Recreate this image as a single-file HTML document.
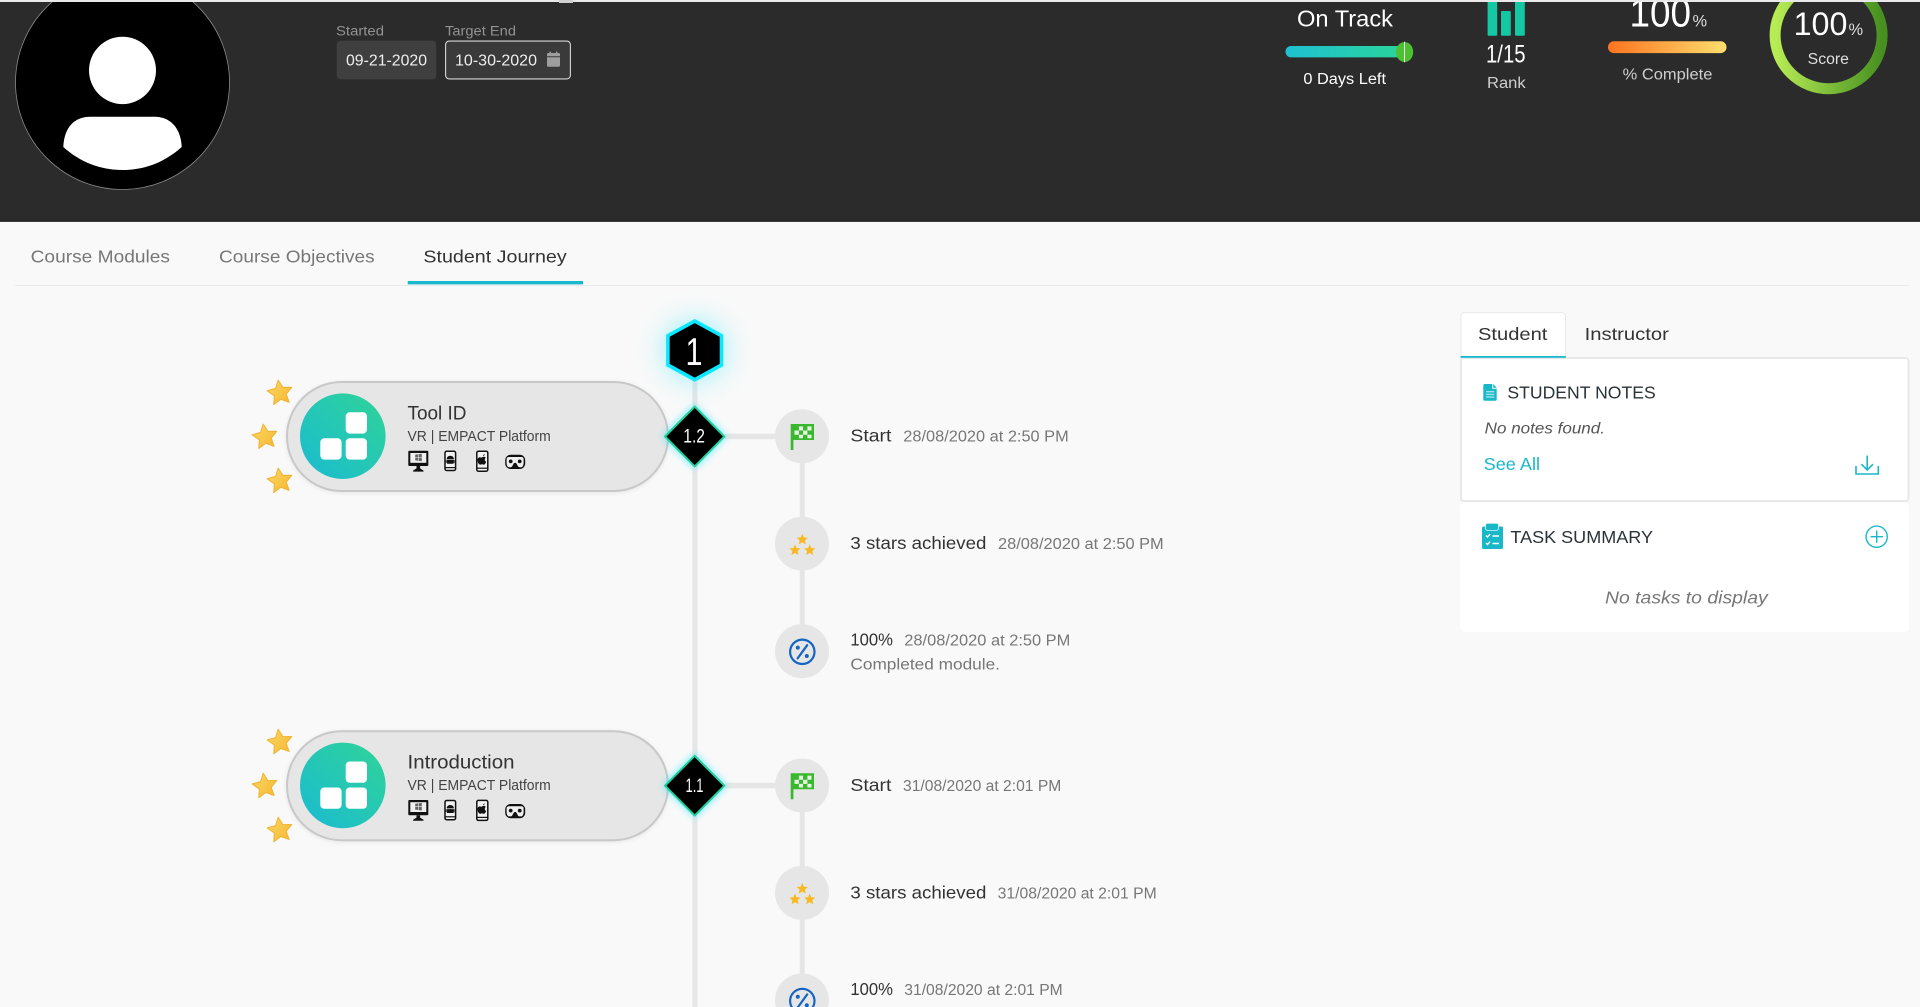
<!DOCTYPE html>
<html lang="en">
<head>
<meta charset="utf-8">
<title>Student Journey</title>
<style>
html,body{margin:0;padding:0;background:#f9f9f9;width:1920px;height:1007px;overflow:hidden}
svg{display:block;filter:blur(.35px)}
text{font-family:"Liberation Sans",sans-serif}
</style>
</head>
<body>
<svg xmlns="http://www.w3.org/2000/svg" width="1920" height="1007" viewBox="0 0 1920 1007">
<defs>
  <linearGradient id="gTeal" x1="0" y1="1" x2="1" y2="0"><stop offset="0" stop-color="#1abbd2"/><stop offset="1" stop-color="#30d497"/></linearGradient>
  <linearGradient id="gBar" x1="0" y1="0" x2="1" y2="0"><stop offset="0" stop-color="#1fc0d2"/><stop offset="1" stop-color="#2bd598"/></linearGradient>
  <linearGradient id="gOr" x1="0" y1="0" x2="1" y2="0"><stop offset="0" stop-color="#ff7420"/><stop offset="1" stop-color="#ffdf6e"/></linearGradient>
  <linearGradient id="gRing" x1="0" y1="0" x2="1" y2="0"><stop offset="0" stop-color="#b8ec55"/><stop offset="1" stop-color="#479020"/></linearGradient>
  <linearGradient id="gStar" x1="0" y1="0" x2="1" y2="1"><stop offset="0" stop-color="#fbd866"/><stop offset="1" stop-color="#f6b630"/></linearGradient>
  <symbol id="bigstar" viewBox="-15 -15 30 30" overflow="visible">
    <path transform="rotate(-8)" d="M0-13 3.7-5.1 12.4-4 6 1.95 7.7 10.5 0 6.3-7.7 10.5-6 1.95-12.4-4-3.7-5.1Z" fill="url(#gStar)" stroke="#f1b536" stroke-width="1.1" stroke-linejoin="round"/>
  </symbol>
  <path id="st" d="M0-5.6 1.6-1.9 5.6-1.6 2.6 1 3.5 5 0 2.9-3.5 5-2.6 1-5.6-1.6-1.6-1.9Z" fill="#f6b921"/>
  <g id="module">
    <rect x="287" y="382" width="381" height="109" rx="54.5" fill="#e6e6e6" stroke="#c8c8c8" stroke-width="2" style="filter:drop-shadow(0 1px 2px rgba(0,0,0,.08))"/>
    <circle cx="342.8" cy="436.2" r="42.8" fill="url(#gTeal)"/>
    <rect x="345.7" y="412.3" width="21.3" height="21.3" rx="4" fill="#fff"/>
    <rect x="320.3" y="438.3" width="21.3" height="21.3" rx="4" fill="#fff"/>
    <rect x="345.7" y="438.3" width="21.3" height="21.3" rx="4" fill="#fff"/>
    <use href="#bigstar" x="265" y="378" width="30" height="30"/>
    <use href="#bigstar" x="250" y="422" width="30" height="30"/>
    <use href="#bigstar" x="265" y="466" width="30" height="30"/>
    <!-- monitor -->
    <rect x="408.3" y="450.8" width="20" height="15.2" rx="1" fill="#111"/>
    <rect x="410.3" y="453" width="16" height="9.8" fill="#f0f0f0"/>
    <path d="M415.2 454.6l2.8-.4v3h-2.8zM418.6 454.1l3.2-.4v3.5h-3.2zM415.2 457.8h2.8v3l-2.8-.4zM418.6 457.8h3.2v3.5l-3.2-.4z" fill="#666"/>
    <path d="M416.5 466h3.6v2.4l3.4 2.2v1h-10.4v-1l3.4-2.2z" fill="#111"/>
    <!-- android phone -->
    <rect x="445" y="451.3" width="10.6" height="19.2" rx="1.6" fill="#f2f2f2" stroke="#111" stroke-width="1.5"/>
    <rect x="445" y="467" width="10.6" height="1.2" fill="#111"/>
    <path d="M450.3 455.8c2.2 0 3.6 1.5 3.6 3.4h-7.2c0-1.9 1.4-3.4 3.6-3.4zM446.7 459.9h7.2v2.6c0 .8-.5 1.3-1.2 1.3h-4.8c-.7 0-1.2-.5-1.2-1.3z" fill="#111"/>
    <path d="M445.7 460h.6v3h-.6zM454.3 460h.6v3h-.6z" fill="#111"/>
    <!-- apple phone -->
    <rect x="476.8" y="451.2" width="11" height="20" rx="1.6" fill="#f2f2f2" stroke="#111" stroke-width="1.5"/>
    <rect x="476.8" y="467.6" width="11" height="1.2" fill="#111"/>
    <path d="M483 456.2c.1-1.1.8-1.9 1.7-2.2 0 1.1-.7 2-1.7 2.2zM481.9 457.1c.7 0 1.2-.4 2-.4.8 0 1.5.4 1.9 1.1-1.5 1-1.3 3.2.4 3.9-.5 1.5-1.4 2.9-2.3 2.9-.8 0-1.1-.4-1.9-.4s-1.1.4-1.9.4c-1.2 0-2.6-2.4-2.6-4.4 0-2 1.2-3 2.4-3 .8 0 1.3.4 2 .4z" fill="#111"/>
    <!-- vr -->
    <rect x="505.2" y="454.8" width="20" height="14.2" rx="5.5" fill="#111"/>
    <path d="M509 457h12.4c1.4 0 2.2.9 2.2 2.2v4c0 1.5-.9 4-2.4 4h-1.9c-1.6 0-2.1-3.4-3.3-4.2-.6-.4-1.2-.4-1.8 0-1.2.8-1.7 4.2-3.3 4.2h-1.9c-1.5 0-2.4-2.5-2.4-4v-4c0-1.3.9-2.2 2.4-2.2z" fill="#f0f0f0"/>
    <circle cx="510.7" cy="461.4" r="1.9" fill="#111"/>
    <circle cx="519.7" cy="461.4" r="1.9" fill="#111"/>
    <!-- connectors & activity circles -->
    <rect x="725" y="433.6" width="52" height="5.6" fill="#e6e6e6"/>
    <rect x="799.8" y="460" width="5" height="60" fill="#e6e6e6"/>
    <rect x="799.8" y="568" width="5" height="60" fill="#e6e6e6"/>
    <circle cx="802" cy="436.3" r="27" fill="#e6e6e6"/>
    <circle cx="802" cy="543.7" r="27" fill="#e6e6e6"/>
    <circle cx="802" cy="651.2" r="27" fill="#e6e6e6"/>
    <!-- flag -->
    <path d="M790.7 424H814V440H793.4V450H790.7Z" fill="#38b82d"/>
    <path d="M794.5 430.5h4.4v4.2h-4.4zM803 430.5h4.4v4.2H803zM798.9 426.4h4.1v4.1h-4.1zM807.4 426.4h4.1v4.1h-4.1zM798.9 434.7h4.1v3.6h-4.1zM807.4 434.7h4.1v3.6h-4.1z" fill="#e8f2e4"/>
    <!-- three stars -->
    <use href="#st" x="802.3" y="539.4"/>
    <use href="#st" x="795" y="550"/>
    <use href="#st" x="809.7" y="550"/>
    <!-- percent -->
    <circle cx="802.3" cy="651.8" r="12.2" fill="none" stroke="#1565c0" stroke-width="2.2"/>
    <path d="M807.2 645.2 797.6 658.4" stroke="#1565c0" stroke-width="2.2" fill="none" stroke-linecap="round"/>
    <circle cx="797.8" cy="647.6" r="2" fill="#1565c0"/>
    <circle cx="806.8" cy="656" r="2" fill="#1565c0"/>
  </g>
</defs>

<rect width="1920" height="1007" fill="#f9f9f9"/>

<!-- header -->
<rect y="0" width="1920" height="2" fill="#e9e9e9"/>
<rect y="2" width="1920" height="219.5" fill="#2b2b2b"/>
<rect y="220.8" width="1920" height="1" fill="#111"/>
<rect x="559" y="0" width="14" height="3" fill="#cfcfcf"/>

<clipPath id="hdr"><rect y="2" width="1920" height="220"/></clipPath>
<g clip-path="url(#hdr)">
  <circle cx="122.5" cy="82.5" r="107" fill="#000" stroke="#8a8a8a" stroke-width=".8"/>
  <ellipse cx="122.5" cy="70.4" rx="33.5" ry="33.7" fill="#fff"/>
  <path d="M63.3 147C64 130 72 117 90 116.7H155C172 117 181 130 181.7 147 165 162 145 170 122.5 170 100 170 80 162 63.3 147Z" fill="#fff"/>

  <text x="336" y="35.6" font-size="13.5" fill="#929292" textLength="48" lengthAdjust="spacingAndGlyphs">Started</text>
  <text x="445" y="35.6" font-size="13.5" fill="#929292" textLength="71" lengthAdjust="spacingAndGlyphs">Target End</text>
  <rect x="336.7" y="40.7" width="99.6" height="38.6" rx="4" fill="#3f3f3f"/>
  <text x="346" y="65.6" font-size="16" fill="#eee" textLength="81" lengthAdjust="spacingAndGlyphs">09-21-2020</text>
  <rect x="445.6" y="41.1" width="124.8" height="37.8" rx="3.5" fill="#3a3a3a" stroke="#d8d8d8" stroke-width="1.1"/>
  <text x="455" y="65.6" font-size="16" fill="#eee" textLength="82" lengthAdjust="spacingAndGlyphs">10-30-2020</text>
  <path d="M547 54.2c0-.8.5-1.2 1.2-1.2h1.3v-1.4h1.5V53h5v-1.4h1.5V53h1.3c.7 0 1.2.4 1.2 1.2v2H547zM547 57.3h13v8.2c0 .8-.5 1.2-1.2 1.2h-10.6c-.7 0-1.2-.4-1.2-1.2z" fill="#9d9d9d"/>

  <text x="1297" y="26.7" font-size="23" fill="#fff" textLength="96" lengthAdjust="spacingAndGlyphs">On Track</text>
  <rect x="1285.5" y="46" width="124" height="11.4" rx="5.7" fill="url(#gBar)"/>
  <ellipse cx="1404.6" cy="52" rx="8.6" ry="10" fill="#4cbf33"/>
  <rect x="1404" y="41.7" width="1" height="20.6" fill="#e8f2e0"/>
  <text x="1303.4" y="84" font-size="15.5" fill="#fff" textLength="82.6" lengthAdjust="spacingAndGlyphs">0 Days Left</text>

  <rect x="1487.6" y="0" width="9.6" height="35.7" rx="1" fill="#14c8a4"/>
  <rect x="1501" y="11" width="9.8" height="24.7" rx="1" fill="#14c8a4"/>
  <rect x="1515" y="0" width="9.8" height="35.7" rx="1" fill="#14c8a4"/>
  <text x="1486" y="62.3" font-size="25" fill="#fff" textLength="39.6" lengthAdjust="spacingAndGlyphs">1/15</text>
  <text x="1487" y="88" font-size="15.5" fill="#cfcfcf" textLength="38.6" lengthAdjust="spacingAndGlyphs">Rank</text>

  <text x="1629.5" y="26.7" font-size="40" fill="#fff" textLength="61.5" lengthAdjust="spacingAndGlyphs">100</text>
  <text x="1692.5" y="26.7" font-size="17" fill="#ddd" textLength="14.6" lengthAdjust="spacingAndGlyphs">%</text>
  <rect x="1608" y="41.3" width="118.5" height="11.8" rx="5.9" fill="url(#gOr)"/>
  <text x="1622.6" y="79.3" font-size="15.5" fill="#cfcfcf" textLength="89.8" lengthAdjust="spacingAndGlyphs">% Complete</text>

  <circle cx="1828.6" cy="35.3" r="53.5" fill="none" stroke="url(#gRing)" stroke-width="11"/>
  <text x="1793.6" y="35" font-size="32" fill="#fff" textLength="53.8" lengthAdjust="spacingAndGlyphs">100</text>
  <text x="1848.5" y="35" font-size="17" fill="#ddd" textLength="14.6" lengthAdjust="spacingAndGlyphs">%</text>
  <text x="1807.7" y="64" font-size="15.5" fill="#ddd" textLength="41.3" lengthAdjust="spacingAndGlyphs">Score</text>
</g>

<!-- tabs -->
<text x="30.6" y="262.5" font-size="17.5" fill="#777" textLength="139.4" lengthAdjust="spacingAndGlyphs">Course Modules</text>
<text x="219" y="262.5" font-size="17.5" fill="#777" textLength="155.7" lengthAdjust="spacingAndGlyphs">Course Objectives</text>
<text x="423.4" y="262.5" font-size="17.5" fill="#333" textLength="143.3" lengthAdjust="spacingAndGlyphs">Student Journey</text>
<rect x="15" y="285" width="1894" height="1" fill="#ebebeb"/>
<rect x="407.7" y="281" width="175.3" height="3.4" fill="#1ab8cc"/>

<!-- timeline spine -->
<rect x="692.4" y="380" width="5" height="627" fill="#e6e6e6"/>

<use href="#module"/>
<use href="#module" y="349.2"/>

<!-- hexagon -->
<path d="M694.7 321 721.5 335.7V365L694.7 379.7 667.9 365V335.7Z" fill="#000" stroke="#0ae8ff" stroke-width="3.6" style="filter:drop-shadow(0 0 14px rgba(0,229,255,.4))"/>
<text x="685.5" y="365" font-size="39" fill="#fff" textLength="17" lengthAdjust="spacingAndGlyphs">1</text>

<!-- diamonds -->
<path d="M694.7 406.6 724.4 436.5 694.7 466.4 665 436.5Z" fill="#000" stroke="#1fd09c" stroke-width="2" stroke-linejoin="round" style="filter:drop-shadow(0 0 4px rgba(0,229,255,.65))"/>
<text x="683.3" y="442.6" font-size="19" fill="#fff" textLength="21.7" lengthAdjust="spacingAndGlyphs">1.2</text>
<path d="M694.7 755.8 724.4 785.7 694.7 815.6 665 785.7Z" fill="#000" stroke="#1fd09c" stroke-width="2" stroke-linejoin="round" style="filter:drop-shadow(0 0 4px rgba(0,229,255,.65))"/>
<text x="685.5" y="792" font-size="19" fill="#fff" textLength="18" lengthAdjust="spacingAndGlyphs">1.1</text>

<!-- module labels -->
<text x="407.5" y="419.3" font-size="19" fill="#333" textLength="59" lengthAdjust="spacingAndGlyphs">Tool ID</text>
<text x="407.5" y="441.2" font-size="14.5" fill="#444" textLength="143.3" lengthAdjust="spacingAndGlyphs">VR | EMPACT Platform</text>
<text x="407.5" y="768.5" font-size="19" fill="#333" textLength="107" lengthAdjust="spacingAndGlyphs">Introduction</text>
<text x="407.5" y="790.2" font-size="14.5" fill="#444" textLength="143.3" lengthAdjust="spacingAndGlyphs">VR | EMPACT Platform</text>

<!-- activity text -->
<text x="850.4" y="441.7" font-size="17.5" fill="#333" textLength="41" lengthAdjust="spacingAndGlyphs">Start</text>
<text x="903.3" y="441.7" font-size="15.5" fill="#777" textLength="165.4" lengthAdjust="spacingAndGlyphs">28/08/2020 at 2:50 PM</text>
<text x="850.4" y="549" font-size="17.5" fill="#333" textLength="136" lengthAdjust="spacingAndGlyphs">3 stars achieved</text>
<text x="998" y="549" font-size="15.5" fill="#777" textLength="165.7" lengthAdjust="spacingAndGlyphs">28/08/2020 at 2:50 PM</text>
<text x="850.4" y="645.5" font-size="17.5" fill="#333" textLength="42.6" lengthAdjust="spacingAndGlyphs">100%</text>
<text x="904.3" y="645.5" font-size="15.5" fill="#777" textLength="166" lengthAdjust="spacingAndGlyphs">28/08/2020 at 2:50 PM</text>
<text x="850.4" y="669.3" font-size="15.5" fill="#777" textLength="149.6" lengthAdjust="spacingAndGlyphs">Completed module.</text>

<text x="850.4" y="791" font-size="17.5" fill="#333" textLength="41" lengthAdjust="spacingAndGlyphs">Start</text>
<text x="903" y="791" font-size="15.5" fill="#777" textLength="158.3" lengthAdjust="spacingAndGlyphs">31/08/2020 at 2:01 PM</text>
<text x="850.4" y="898.3" font-size="17.5" fill="#333" textLength="136" lengthAdjust="spacingAndGlyphs">3 stars achieved</text>
<text x="997.7" y="898.3" font-size="15.5" fill="#777" textLength="159" lengthAdjust="spacingAndGlyphs">31/08/2020 at 2:01 PM</text>
<text x="850.4" y="994.8" font-size="17.5" fill="#333" textLength="42.6" lengthAdjust="spacingAndGlyphs">100%</text>
<text x="904.3" y="994.8" font-size="15.5" fill="#777" textLength="158.4" lengthAdjust="spacingAndGlyphs">31/08/2020 at 2:01 PM</text>

<!-- right panel -->
<path d="M1461 357.5V316a3.5 3.5 0 0 1 3.5-3.5h97.5a3.5 3.5 0 0 1 3.5 3.5v41.5Z" fill="#fff" stroke="#e9e9e9" stroke-width="1"/>
<rect x="1461" y="358" width="447.5" height="143" rx="3" fill="#fff" stroke="#e8e8e8" stroke-width="2"/>
<rect x="1460.5" y="356" width="105.3" height="1.8" fill="#1ab8cc"/>
<text x="1478" y="340" font-size="17.5" fill="#333" textLength="69.4" lengthAdjust="spacingAndGlyphs">Student</text>
<text x="1584.6" y="340" font-size="17.5" fill="#333" textLength="84.3" lengthAdjust="spacingAndGlyphs">Instructor</text>

<path d="M1483.3 385.2c0-.7.5-1.2 1.2-1.2h7.7v4.8h4.5v10.7c0 .7-.5 1.2-1.2 1.2h-11c-.7 0-1.2-.5-1.2-1.2zM1493.2 384l3.5 3.8h-3.5z" fill="#19b8c9"/>
<path d="M1486 391h8.3v1.4H1486zM1486 393.7h8.3v1.4H1486zM1486 396.4h8.3v1.4H1486z" fill="#9fe2e9"/>
<text x="1507.4" y="398.6" font-size="17.5" fill="#2a3338" textLength="148.3" lengthAdjust="spacingAndGlyphs">STUDENT NOTES</text>
<text x="1484.7" y="433.5" font-size="15.5" font-style="italic" fill="#555" textLength="120.3" lengthAdjust="spacingAndGlyphs">No notes found.</text>
<text x="1483.7" y="470" font-size="17.5" fill="#19b8c9" textLength="56.3" lengthAdjust="spacingAndGlyphs">See All</text>
<path d="M1856 466v8h22.3v-8M1867.2 455.5v14.5M1861.4 464.2l5.8 5.8 5.8-5.8" fill="none" stroke="#19b8c9" stroke-width="1.6"/>

<rect x="1460" y="502.7" width="449" height="129" rx="4" fill="#fff"/>
<path d="M1483.5 526.5h18c.9 0 1.5.6 1.5 1.5v19.5c0 .9-.6 1.5-1.5 1.5h-18c-.9 0-1.5-.6-1.5-1.5V528c0-.9.6-1.5 1.5-1.5z" fill="#19b8c9"/>
<rect x="1485.5" y="523.3" width="13" height="7" rx="2" fill="#19b8c9" stroke="#fff" stroke-width=".7"/>
<path d="M1486 535.5l1.5 1.5 2.6-2.8M1486 543l1.5 1.5 2.6-2.8M1492.5 536h6.5M1492.5 543.5h6.5" fill="none" stroke="#fff" stroke-width="1.4"/>
<text x="1510.4" y="543" font-size="17.5" fill="#2a3338" textLength="142.6" lengthAdjust="spacingAndGlyphs">TASK SUMMARY</text>
<circle cx="1876.7" cy="536.7" r="10.6" fill="none" stroke="#19b8c9" stroke-width="1.4"/>
<path d="M1876.7 530.5v12.4M1870.5 536.7h12.4" stroke="#19b8c9" stroke-width="1.4" fill="none"/>
<text x="1605" y="603.5" font-size="17.5" font-style="italic" fill="#777" textLength="162.7" lengthAdjust="spacingAndGlyphs">No tasks to display</text>
</svg>
</body>
</html>
